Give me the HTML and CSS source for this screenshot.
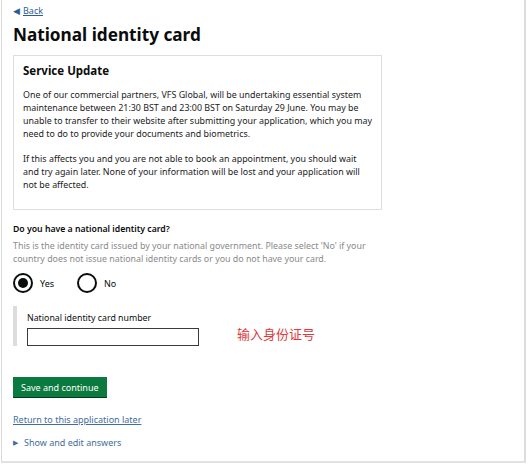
FILE: index.html
```html
<!DOCTYPE html>
<html>
<head>
<meta charset="utf-8">
<link rel="stylesheet" href="styles.css">
</head>
<body>
<div class="frame">
  <a class="back" href="#"><span class="back-arrow">◀</span><span class="back-text">Back</span></a>
  <h1 class="title">National identity card</h1>
  <div class="notice">
    <h2 class="notice-title">Service Update</h2>
    <p class="notice-text">One of our commercial partners, VFS Global, will be undertaking essential system maintenance between 21:30 BST and 23:00 BST on Saturday 29 June. You may be unable to transfer to their website after submitting your application, which you may need to do to provide your documents and biometrics.</p>
    <p class="notice-text">If this affects you and you are not able to book an appointment, you should wait and try again later. None of your information will be lost and your application will not be affected.</p>
  </div>
  <div class="question">Do you have a national identity card?</div>
  <div class="hint">This is the identity card issued by your national government. Please select 'No' if your country does not issue national identity cards or you do not have your card.</div>
  <div class="radios">
    <label class="radio"><span class="radio-circle checked"></span><span class="radio-label">Yes</span></label>
    <label class="radio"><span class="radio-circle"></span><span class="radio-label">No</span></label>
  </div>
  <div class="conditional-row">
    <div class="conditional">
      <div class="field-label">National identity card number</div>
      <div class="input"></div>
    </div>
    <div class="annotation">输入身份证号</div>
  </div>
  <button class="button">Save and continue</button>
  <a class="later" href="#">Return to this application later</a>
  <div class="details"><span class="details-arrow">▶</span>Show and edit answers</div>
</div>
</body>
</html>
```

FILE: styles.css
```css
html, body {
  margin: 0;
  padding: 0;
  background: #ffffff;
}
body {
  font-family: "Noto Sans", "Open Sans", sans-serif;
  color: #0b0c0c;
  width: 529px;
  height: 468px;
  overflow: hidden;
}
.frame {
  box-sizing: border-box;
  width: 525px;
  height: 463px;
  margin-left: 1px;
  border-left: 1px solid #d8d8d8;
  border-right: 2px solid #dcdcdc;
  border-bottom: 2px solid #e2e2e2;
  padding: 3px 0 0 11px;
  display: flex;
  flex-direction: column;
  align-items: flex-start;
}
.back {
  font-size: 9px;
  color: #2b5d9c;
  text-decoration: none;
  display: flex;
  align-items: center;
  height: 14px;
}
.back-arrow {
  font-size: 9px;
  margin-right: 3px;
}
.back-text {
  text-decoration: underline;
}
.title {
  font-size: 17.2px;
  font-weight: 700;
  margin: 7px 0 0 0;
  line-height: 22px;
}
.notice {
  box-sizing: border-box;
  width: 369px;
  margin-top: 9px;
  border: 1px solid #dedede;
  padding: 6px 9px 18px 9px;
}
.notice-title {
  font-size: 11.5px;
  font-weight: 700;
  margin: 0 0 9px 0;
  line-height: 17px;
}
.notice-text {
  font-size: 8.9px;
  line-height: 13px;
  margin: 0 0 12px 0;
  color: #222;
}
.notice-text:last-child {
  margin-bottom: 0;
}
.question {
  margin-top: 13px;
  font-size: 8.7px;
  font-weight: 600;
  line-height: 13px;
}
.hint {
  margin-top: 4px;
  font-size: 8.85px;
  line-height: 13px;
  color: #8a8a8a;
  width: 375px;
}
.radios {
  display: flex;
  gap: 7px;
  margin-top: 7px;
}
.radio {
  display: flex;
  align-items: center;
  gap: 7px;
  font-size: 9px;
  width: 57px;
}
.radio-circle {
  box-sizing: border-box;
  width: 20px;
  height: 20px;
  border: 2px solid #0b0c0c;
  border-radius: 50%;
  display: flex;
  align-items: center;
  justify-content: center;
}
.radio-circle.checked::after {
  content: "";
  width: 10px;
  height: 10px;
  border-radius: 50%;
  background: #0b0c0c;
}
.conditional-row {
  display: flex;
  align-items: flex-end;
  margin-top: 13px;
}
.conditional {
  border-left: 4px solid #dcdcdc;
  padding: 6px 0 0 10px;
}
.field-label {
  font-size: 8.8px;
  line-height: 13px;
}
.input {
  box-sizing: border-box;
  width: 172px;
  height: 18px;
  margin-top: 3px;
  border: 1.5px solid #3a3a3a;
}
.annotation {
  color: #e0393a;
  font-family: "Noto Sans CJK SC", sans-serif;
  font-size: 13px;
  line-height: 18px;
  margin-left: 38px;
  margin-bottom: 3px;
}
.button {
  margin-top: 31px;
  background: #0b7a3e;
  color: #ffffff;
  border: none;
  font-family: "Noto Sans", sans-serif;
  font-size: 9px;
  height: 20px;
  padding: 0 8px;
  box-shadow: 0 1px 0 #003a1e;
}
.later {
  margin-top: 16px;
  font-size: 9px;
  color: #3f6e9e;
  text-decoration: underline;
  line-height: 13px;
}
.details {
  margin-top: 10px;
  font-size: 9px;
  color: #3f6e9e;
  line-height: 13px;
  display: flex;
  align-items: center;
}
.details-arrow {
  font-size: 7px;
  margin-right: 6px;
}
```
